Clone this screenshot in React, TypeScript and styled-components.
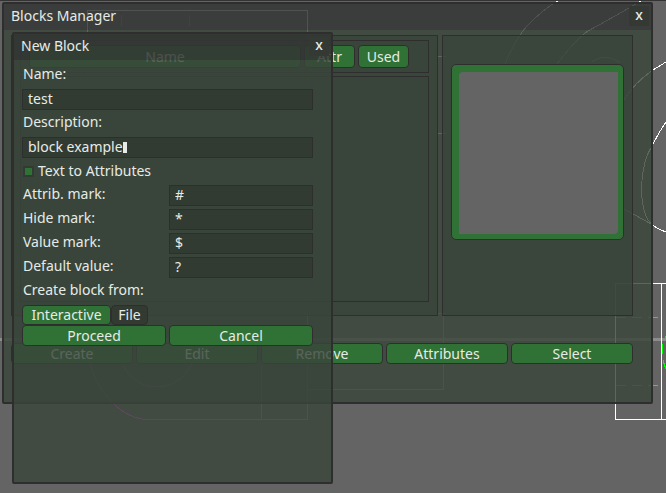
import React, { useState } from "react";
import styled, { createGlobalStyle, css } from "styled-components";

const ink = "#e6ebe7";
const edge = "#2e2e2e";
const green = "#307135";
const panelFill = "rgba(57, 70, 58, 0.82)";
const headerFill = "rgba(51, 55, 52, 0.863)";
const fieldFill = "rgba(50, 58, 48, 0.882)";

const GlobalStyle = createGlobalStyle`
  * { box-sizing: border-box; }
  body { margin: 0; background: #646464; color: ${ink}; overflow: hidden; }
  body, button, input { font-family: "Noto Sans", sans-serif; font-size: 14px; line-height: 17px; }
`;

const Desktop = styled.main`
  position: relative;
  min-height: 100vh;
  padding: 2px 13px 0 2px;
`;

const Canvas = styled.svg`
  position: absolute;
  inset: 0;
  width: 100%;
  height: 100%;
  fill: none;
  shape-rendering: crispEdges;
`;

const Window = styled.section`
  position: relative;
  border: 2px solid ${edge};
  border-radius: 2px;
  display: flex;
  flex-direction: column;
`;

const Dialog = styled(Window)`
  position: absolute;
  top: 32px;
  left: 12px;
  width: calc(50vw - 12px);
  height: 452px;
`;

const TitleBar = styled.header`
  display: flex;
  align-items: center;
  justify-content: space-between;
  height: 26px;
  padding: 0 2px 3px 7px;
  background: ${headerFill};
`;

const Title = styled.h1`
  margin: 0;
  font-size: 14px;
  line-height: 17px;
  font-weight: 400;
`;

const Close = styled.button`
  width: 20px;
  height: 20px;
  padding: 0 0 2px;
  border: 0;
  background: #343934;
  color: ${ink};
  font-weight: 500;
`;

const ManagerBody = styled.div`
  padding: 5px 18px 38px 7px;
  background: ${panelFill};
`;

const DialogBody = styled.form`
  flex: 1;
  padding: 5px 18px 0 8px;
  background: ${panelFill};
`;

const Panels = styled.div`
  display: grid;
  grid-template-columns: 427fr 191fr;
  gap: 4px;
  margin-bottom: 27px;
`;

const Group = styled.div`
  border: 1px solid ${edge};
  background: ${panelFill};
  padding: 4px 8px 13px;
`;

const PreviewGroup = styled(Group)`
  padding: 28px 8px 0;
`;

const Columns = styled.div`
  display: grid;
  grid-template-columns: 1fr 51px 51px;
  gap: 3px;
  border: 1px solid ${edge};
  background: ${panelFill};
  padding: 4px 19px 4px 8px;
  margin-bottom: 3px;
`;

const List = styled.div`
  height: 226px;
  border: 1px solid ${edge};
  background: ${panelFill};
`;

const Preview = styled.button`
  display: block;
  width: 100%;
  height: 176px;
  padding: 0;
  border: 1px solid ${edge};
  border-radius: 5px;
  background: #646464;
  box-shadow: inset 7px 7px 0 ${green}, inset -5px -5px 0 ${green};
`;

const Button = styled.button<{ $tall?: boolean }>`
  height: ${(p) => (p.$tall ? 23 : 21)}px;
  min-width: 0;
  padding: 0 0 1px;
  border: 1px solid ${edge};
  border-radius: 4px;
  background: ${green};
  color: ${ink};
`;

const Actions = styled.div<{ $count: number }>`
  display: grid;
  grid-template-columns: repeat(${(p) => p.$count}, 1fr);
  gap: 3px;
`;

const Fields = styled.div`
  display: grid;
  gap: 3px;
`;

const Label = styled.label`
  height: 21px;
  padding-left: 1px;
`;

const Pair = styled.div`
  display: grid;
  grid-template-columns: 1fr 1fr;
  gap: 3px;
`;

const Field = styled.div`
  display: flex;
  align-items: center;
  height: 21px;
  padding: 0 5px 3px;
  border: 1px solid ${edge};
  background: ${fieldFill};
`;

const TextInput = styled.input<{ $hug?: boolean }>`
  min-width: 0;
  padding: 0;
  border: 0;
  outline: 0;
  background: transparent;
  color: ${ink};
  ${(p) => (p.$hug ? css`field-sizing: content;` : css`width: 100%;`)}
`;

const Caret = styled.span`
  width: 4px;
  height: 11px;
  margin-top: 3px;
  background: ${ink};
`;

const CheckRow = styled.label`
  display: flex;
  align-items: center;
  gap: 4px;
  height: 21px;
  padding: 0 0 3px 1px;
`;

const Check = styled.input`
  appearance: none;
  width: 11px;
  height: 11px;
  margin: 3px 0 0;
  border: 2px solid #323b33;
  background: #323b33;
  &:checked { background: ${green}; }
`;

const Tabs = styled.div`
  display: grid;
  grid-template-columns: 89px 37px;
  margin-top: 3px;
`;

const Tab = styled.button<{ $active: boolean }>`
  height: 20px;
  padding: 0 0 1px;
  border: 1px solid ${edge};
  border-radius: 4px;
  background: ${(p) => (p.$active ? green : "#323a31")};
  color: ${ink};
`;

const marks = [
  ["attrib", "Attrib. mark:", "#"],
  ["hide", "Hide mark:", "*"],
  ["value", "Value mark:", "$"],
  ["default", "Default value:", "?"],
];

function Drawing() {
  return (
    <Canvas aria-hidden="true">
      <path d="M0 .5H2000" stroke="#333" />
      <path d="M0 339.5H2000" stroke="#8c8c8c" strokeWidth="3" />
      <g stroke="#fff">
        <path d="M87.5 340V10.5H307.5V340M615.5 419.5V283.5H666M661.5 283V419M615 419.5H666" />
        <path d="M438 56.5H446M438 133.5H446" />
        <path d="M505 64Q517 35 530 23Q545 8 558 1" />
        <path d="M557 64Q575 40 588 31Q612 18 641 1" />
        <path d="M592 62Q606 52 620 63" />
        <path d="M624 100Q634 83 653 70L666 62" />
        <path d="M666 122Q659 132 653 144Q642 161 641.500 188Q642 218 653 225Q660 231 666 231.500" />
        <path d="M624 209L653 225" />
      </g>
      <g stroke="#ff50ff">
        <path d="M88 350C91 388 120 417 145 419.500H307.500V345M261.500 365V419M307 389.500H443.500V313.500M438 313.500H446" />
        <path d="M120 350A37 37 0 0 0 194 350" />
      </g>
      <g stroke="#0f0">
        <path d="M121.500 15V26M189.500 15V26" />
        <path d="M616 317.500H626M632 317.500H642M648 317.500H658M616 385.500H626M632 385.500H642M648 385.500H658" />
        <path d="M665.500 336V338M662.500 344V354M663.500 360V364M664.500 363V367M665.500 366V369" />
      </g>
    </Canvas>
  );
}

export default function App() {
  const [source, setSource] = useState("Interactive");
  return (
    <>
      <GlobalStyle />
      <Desktop>
        <Drawing />
        <Window>
          <TitleBar>
            <Title>Blocks Manager</Title>
            <Close aria-label="Close Blocks Manager">x</Close>
          </TitleBar>
          <ManagerBody>
            <Panels>
              <Group>
                <Columns>
                  <Button $tall>Name</Button>
                  <Button $tall>Attr</Button>
                  <Button $tall>Used</Button>
                </Columns>
                <List />
              </Group>
              <PreviewGroup>
                <Preview aria-label="Block preview" />
              </PreviewGroup>
            </Panels>
            <Actions $count={5}>
              {["Create", "Edit", "Remove", "Attributes", "Select"].map((name) => (
                <Button key={name}>{name}</Button>
              ))}
            </Actions>
          </ManagerBody>
        </Window>

        <Dialog role="dialog" aria-label="New Block">
          <TitleBar>
            <Title as="h2">New Block</Title>
            <Close aria-label="Close New Block">x</Close>
          </TitleBar>
          <DialogBody onSubmit={(e) => e.preventDefault()}>
            <Fields>
              <Label htmlFor="name">Name:</Label>
              <Field>
                <TextInput id="name" defaultValue="test" />
              </Field>
              <Label htmlFor="description">Description:</Label>
              <Field>
                <TextInput id="description" $hug defaultValue="block example" />
                <Caret />
              </Field>
              <CheckRow>
                <Check type="checkbox" defaultChecked />
                Text to Attributes
              </CheckRow>
              {marks.map(([id, label, value]) => (
                <Pair key={id}>
                  <Label htmlFor={id}>{label}</Label>
                  <Field>
                    <TextInput id={id} defaultValue={value} />
                  </Field>
                </Pair>
              ))}
              <Label as="div">Create block from:</Label>
            </Fields>
            <Tabs>
              {["Interactive", "File"].map((name) => (
                <Tab
                  key={name}
                  type="button"
                  aria-pressed={source === name}
                  $active={source === name}
                  onClick={() => setSource(name)}
                >
                  {name}
                </Tab>
              ))}
            </Tabs>
            <Actions $count={2}>
              <Button type="submit">Proceed</Button>
              <Button type="button">Cancel</Button>
            </Actions>
          </DialogBody>
        </Dialog>
      </Desktop>
    </>
  );
}
